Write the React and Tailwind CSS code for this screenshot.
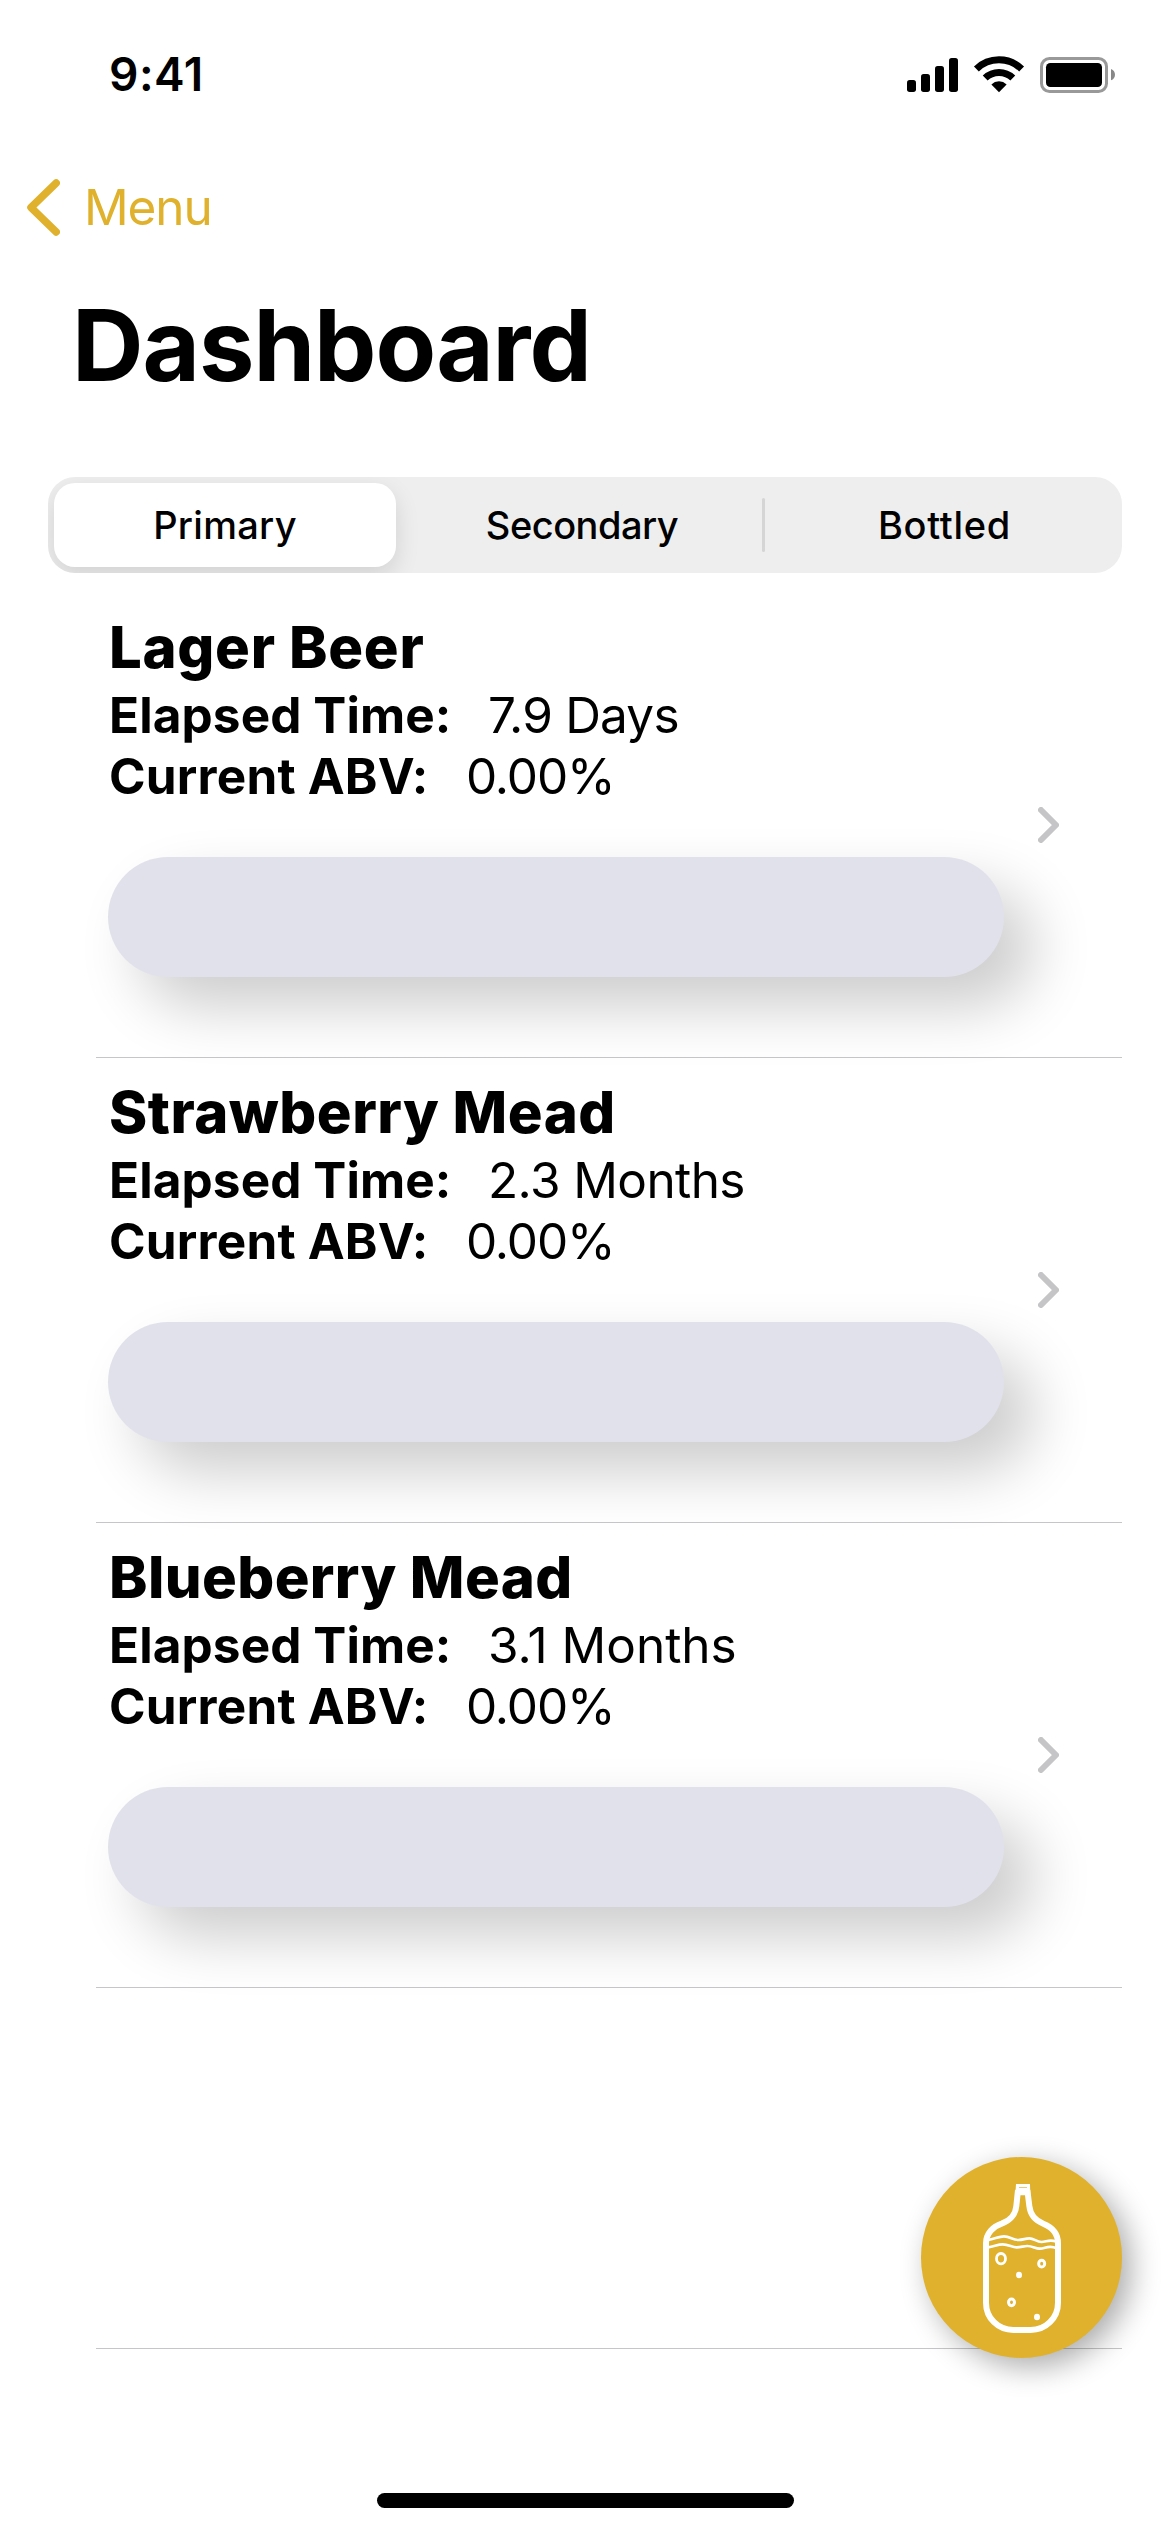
import React from "react";

const GOLD = "#e0b12c";

const brews = [
  { name: "Lager Beer", elapsed: "7.9 Days", abv: "0.00%", nameTracking: "tracking-[0.7px]", valueTracking: "tracking-[-0.8px]" },
  { name: "Strawberry Mead", elapsed: "2.3 Months", abv: "0.00%", nameTracking: "tracking-[0.5px]", valueTracking: "tracking-[-0.6px]" },
  { name: "Blueberry Mead", elapsed: "3.1 Months", abv: "0.00%", nameTracking: "tracking-[0.4px]", valueTracking: "tracking-[0px]" },
];

function StatusIcons() {
  return (
    <svg className="h-[37px] w-[208px]" viewBox="81 75 624 111" fill="none">
      <g fill="#000">
        <rect x="81" y="147" width="27" height="36" rx="8" />
        <rect x="123" y="129" width="27" height="54" rx="8" />
        <rect x="165" y="105" width="27" height="78" rx="8" />
        <rect x="207" y="81" width="27" height="102" rx="8" />
        <path d="M357 184L334.1 160.3A33 33 0 0 1 379.9 160.3Z" />
      </g>
      <path d="M289.2 113.9A97.5 97.5 0 0 1 424.8 113.9" stroke="#000" strokeWidth="21" />
      <path d="M315.6 141.2A59.5 59.5 0 0 1 398.4 141.2" stroke="#000" strokeWidth="21" />
      <rect x="484.5" y="82.5" width="195" height="99" rx="24" stroke="#999" strokeWidth="9" />
      <rect x="498" y="96" width="168" height="72" rx="13" fill="#000" />
      <path d="M693 114C709 120 709 142 693 148Z" fill="#888" />
    </svg>
  );
}

function BottleIcon() {
  return (
    <svg className="size-full" viewBox="63 81 603 603" fill="none" stroke="#fff">
      <path
        strokeWidth="18"
        d="M354 180L349 228C347 254 328 273 305 281C280 289 258 310 258 340V518C258 565 295 600 340 600H392C437 600 474 565 474 518V340C474 310 455 291 430 281C407 272 391 255 388 228L382 180"
      />
      <path d="M348 162H390L391 196H346Z" fill="#fff" stroke="none" />
      <path d="M357 172.500H381" stroke={GOLD} strokeWidth="2" />
      <path
        strokeWidth="8"
        d="M264 330C285 326 298 319 312 319C330 319 338 330 355 330C370 330 375 325 388 325C402 325 410 336 424 336C440 336 446 327 470 335"
      />
      <path
        strokeWidth="8"
        d="M264 352C285 348 295 343 308 343C326 343 336 352 350 352C364 352 370 348 382 348C398 348 406 356 419 356C436 356 446 344 470 355"
      />
      <ellipse cx="303" cy="386" rx="13.5" ry="15.500" strokeWidth="8.5" />
      <ellipse cx="425" cy="401" rx="9" ry="10" strokeWidth="9" />
      <ellipse cx="334.500" cy="517" rx="9" ry="10" strokeWidth="9" />
      <ellipse cx="357" cy="435" rx="9" ry="10" fill="#fff" stroke="none" />
      <ellipse cx="411" cy="561" rx="9" ry="10" fill="#fff" stroke="none" />
    </svg>
  );
}

function SegmentedControl() {
  return (
    <div className="mx-12 mt-[69px] flex h-24 overflow-hidden rounded-[27px] bg-[#eeeeee] p-1.5 text-[38px] font-medium">
      <button className="h-[84px] w-[342px] rounded-[21px] bg-white tracking-[0.3px] shadow-[0_9px_24px_rgba(0,0,0,0.12)]">
        Primary
      </button>
      <button className="w-[366px] pl-1.5 tracking-[-0.5px]">Secondary</button>
      <span className="h-[54px] w-[3px] self-center rounded-full bg-[#d5d5d6]" />
      <button className="flex-1 pl-2 tracking-[0.7px]">Bottled</button>
    </div>
  );
}

function BrewRow({ name, elapsed, abv, nameTracking, valueTracking }) {
  return (
    <li className="mr-12 ml-24 flex h-[465px] items-center border-b border-[#c6c6c8] pl-3">
      <div className="h-full w-[896px] pt-[18px]">
        <h2 className={`ml-px h-[74px] text-[58px] leading-[72px] font-extrabold ${nameTracking}`}>{name}</h2>
        <p className="ml-px flex h-[61px] text-[49.5px] leading-[61px]">
          <span className="w-[379px] font-bold tracking-[0.1px]">Elapsed Time:</span>
          <span className={valueTracking}>{elapsed}</span>
        </p>
        <p className="ml-px flex h-[61px] text-[49.5px] leading-[61px]">
          <span className="w-[357px] font-bold tracking-[0.2px]">Current ABV:</span>
          <span className="tracking-[-1.1px]">{abv}</span>
        </p>
        <div className="mt-[50px] h-[120px] rounded-full bg-[#e1e1eb] shadow-[30px_30px_60px_rgba(0,0,0,0.2)]" />
      </div>
      <svg className="ml-[34px] h-9 w-[21px]" viewBox="0 0 21 36" fill="none">
        <path d="M3 3L18 18L3 33" stroke="#c5c5c7" strokeWidth="6" strokeLinecap="round" strokeLinejoin="round" />
      </svg>
    </li>
  );
}

export default function App() {
  return (
    <div className="relative flex h-[2532px] w-[1170px] flex-col overflow-hidden bg-white font-[Inter,sans-serif] text-black">
      <header className="flex h-[148px] shrink-0 items-center justify-between pr-[55px] pl-[109px]">
        <span className="text-[46px] font-semibold tracking-[0.5px]">9:41</span>
        <StatusIcons />
      </header>

      <nav className="flex h-[118px] shrink-0 items-center pl-[27px] text-[#e0b12c]">
        <svg className="h-[57px] w-[33px]" viewBox="0 0 33 57" fill="none">
          <path d="M29.200 4L4 28.500L29.200 53" stroke="currentColor" strokeWidth="7.500" strokeLinecap="round" strokeLinejoin="round" />
        </svg>
        <span className="ml-6 text-[49.5px] tracking-[-1.1px]">Menu</span>
      </nav>

      <h1 className="mt-4 ml-[72px] h-[126px] shrink-0 text-[99px] leading-[126px] font-bold tracking-[-1px]">Dashboard</h1>

      <SegmentedControl />

      <main className="mt-5">
        <ul>
          {brews.map((brew) => (
            <BrewRow key={brew.name} {...brew} />
          ))}
          <li className="mr-12 ml-24 h-[361px] border-b border-[#c6c6c8]" />
        </ul>
      </main>

      <button className="absolute top-[2157px] left-[921px] size-[201px] rounded-full bg-[#e0b12c] shadow-[9px_9px_30px_rgba(0,0,0,0.33)]">
        <BottleIcon />
      </button>

      <div className="mx-auto mt-auto mb-6 h-[15px] w-[417px] shrink-0 rounded-full bg-black" />
    </div>
  );
}
